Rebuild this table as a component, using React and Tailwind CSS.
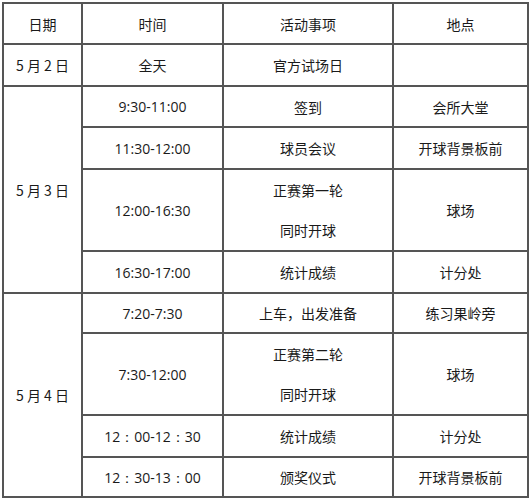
import React from 'react'

const cell = 'border-2 border-[#555] text-center align-middle p-0 leading-[20px]'
const timeFont = "font-['Open_Sans',sans-serif] text-[14px]"

const rows = [
  { date: '5 月 2 日', span: 1, time: '全天', act: ['官方试场日'], place: '', h: 'h-[42px]' },
  { date: '5 月 3 日', span: 4, time: '9:30-11:00', act: ['签到'], place: '会所大堂', h: 'h-[41px]' },
  { time: '11:30-12:00', act: ['球员会议'], place: '开球背景板前', h: 'h-[42px]' },
  { time: '12:00-16:30', act: ['正赛第一轮', '同时开球'], place: '球场', h: 'h-[82px]' },
  { time: '16:30-17:00', act: ['统计成绩'], place: '计分处', h: 'h-[42px]' },
  { date: '5 月 4 日', span: 4, time: '7:20-7:30', act: ['上车，出发准备'], place: '练习果岭旁', h: 'h-[40px]' },
  { time: '7:30-12:00', act: ['正赛第二轮', '同时开球'], place: '球场', h: 'h-[82px]' },
  { time: '12：00-12：30', act: ['统计成绩'], place: '计分处', h: 'h-[42px]' },
  { time: '12：30-13：00', act: ['颁奖仪式'], place: '开球背景板前', h: 'h-[40px]' },
]

export default function App() {
  return (
    <div className="w-[530px] h-[500px] bg-white pt-[2px] pl-[2px] font-['Noto_Sans_CJK_SC',sans-serif] text-[14px] text-[#1a1a1a]">
      <table className="table-fixed border-collapse w-[525px]">
        <colgroup>
          <col className="w-[79px]" />
          <col className="w-[141px]" />
          <col className="w-[170px]" />
          <col className="w-[135px]" />
        </colgroup>
        <tbody>
          <tr className="h-[41px]">
            <td className={cell}>日期</td>
            <td className={cell}>时间</td>
            <td className={cell}>活动事项</td>
            <td className={cell}>地点</td>
          </tr>
          {rows.map((r, i) => (
            <tr key={i} className={r.h}>
              {r.date && (
                <td rowSpan={r.span} className={cell}>
                  {r.date}
                </td>
              )}
              <td className={cell}>
                <span className={r.time.length > 2 ? timeFont : ''}>{r.time}</span>
              </td>
              <td className={cell}>
                {r.act.length > 1
                  ? r.act.map((a) => (
                      <div key={a} className="leading-[40px]">
                        {a}
                      </div>
                    ))
                  : r.act[0]}
              </td>
              <td className={cell}>{r.place}</td>
            </tr>
          ))}
        </tbody>
      </table>
    </div>
  )
}
